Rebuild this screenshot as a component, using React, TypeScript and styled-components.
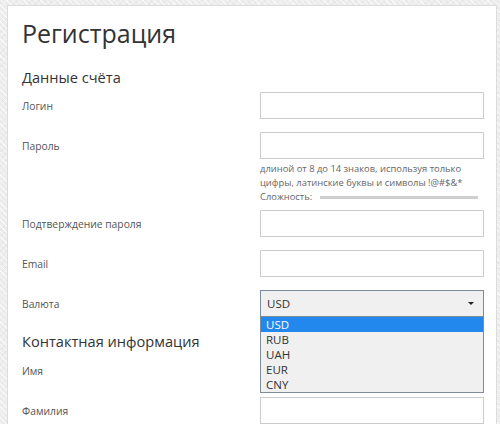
import React from 'react';
import styled, { createGlobalStyle } from 'styled-components';

const GlobalStyle = createGlobalStyle`
  html, body {
    margin: 0;
    padding: 0;
  }

  body {
    width: 500px;
    height: 424px;
    overflow: hidden;
    font-family: 'Open Sans', 'Noto Sans', sans-serif;
    color: #333;
    background-color: #ededed;
    background-image:
      repeating-linear-gradient(45deg, rgba(255, 255, 255, 0.6) 0 1px, transparent 1px 4px),
      repeating-linear-gradient(-45deg, rgba(0, 0, 0, 0.03) 0 1px, transparent 1px 5px);
  }
`;

const currencies = ['USD', 'RUB', 'UAH', 'EUR', 'CNY'];

type FieldProps = {
  label: string;
  children?: React.ReactNode;
};

const Field = ({ label, children }: FieldProps) => (
  <Row>
    <Label>{label}</Label>
    <Control>{children ?? <Input />}</Control>
  </Row>
);

export default function App() {
  return (
    <>
      <GlobalStyle />
      <Page>
        <Card>
          <Title>Регистрация</Title>

          <Section $first>Данные счёта</Section>
          <Field label="Логин" />
          <Field label="Пароль" />
          <Hint>
            <span>длиной от 8 до 14 знаков, используя только</span>
            <span>цифры, латинские буквы и символы !@#$&amp;*</span>
            <Strength>
              Сложность:
              <StrengthBar />
            </Strength>
          </Hint>
          <Field label="Подтверждение пароля" />
          <Field label="Email" />
          <Field label="Валюта">
            <SelectWrap>
              <Select>
                USD
                <Caret />
              </Select>
              <Options>
                {currencies.map((c, i) => (
                  <Option key={c} $active={i === 0}>
                    {c}
                  </Option>
                ))}
              </Options>
            </SelectWrap>
          </Field>

          <Section>Контактная информация</Section>
          <Field label="Имя" />
          <Field label="Фамилия" />
        </Card>
      </Page>
    </>
  );
}

const Page = styled.div`
  padding: 5px 3px 0 7px;
`;

const Card = styled.div`
  display: flex;
  flex-direction: column;
  height: 440px;
  padding: 9px 12px 0 14px;
  background: #fff;
  border: 1px solid #dcdcdc;
  border-bottom: none;
`;

const Title = styled.h1`
  margin: 0;
  font-size: 25px;
  font-weight: 400;
  line-height: 36px;
  color: #333;
`;

const Section = styled.h2<{ $first?: boolean }>`
  margin: ${(p) => (p.$first ? '15px 0 4px' : '0 0 5px')};
  font-size: 14.6px;
  font-weight: 400;
  line-height: 22px;
  color: #333;
`;

const Row = styled.div`
  display: grid;
  grid-template-columns: 238px 224px;
  align-items: center;
  margin-bottom: 13px;
`;

const Label = styled.div`
  font-size: 10.3px;
  color: #555;
`;

const Control = styled.div`
  position: relative;
`;

const Input = styled.div`
  box-sizing: border-box;
  height: 27px;
  background: #fff;
  border: 1px solid #ccc;
`;

const Hint = styled.div`
  display: flex;
  flex-direction: column;
  margin: -10px 0 6px 238px;
  font-size: 9.4px;
  line-height: 14px;
  color: #666;
`;

const Strength = styled.div`
  display: flex;
  align-items: center;
`;

const StrengthBar = styled.div`
  width: 158px;
  height: 3px;
  margin-left: 8px;
  background: #cfcfcf;
`;

const SelectWrap = styled.div`
  position: relative;
`;

const Select = styled.div`
  box-sizing: border-box;
  display: flex;
  align-items: center;
  justify-content: space-between;
  height: 27px;
  padding: 0 9px 0 6px;
  font-size: 11.5px;
  color: #333;
  background: #f0f0f0;
  border: 1px solid #7e8c99;
`;

const Caret = styled.span`
  width: 0;
  height: 0;
  border-left: 3px solid transparent;
  border-right: 3px solid transparent;
  border-top: 3px solid #222;
`;

const Options = styled.ul`
  position: absolute;
  top: 27px;
  left: 0;
  z-index: 2;
  box-sizing: border-box;
  width: 224px;
  margin: 0;
  padding: 0;
  list-style: none;
  background: #f0f0f0;
  border: 1px solid #7e8c99;
  border-top: none;
`;

const Option = styled.li<{ $active?: boolean }>`
  height: 15px;
  padding-left: 5px;
  font-size: 11.5px;
  line-height: 15px;
  color: ${(p) => (p.$active ? '#fff' : '#333')};
  background: ${(p) => (p.$active ? '#2288ee' : 'transparent')};
`;
